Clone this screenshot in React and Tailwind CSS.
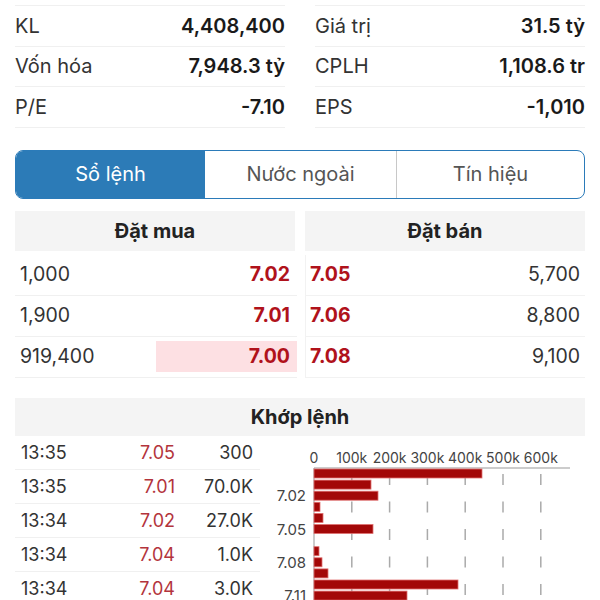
export default function App() {
  const stats = [
    [["KL", "4,408,400"], ["Giá trị", "31.5 tỷ"]],
    [["Vốn hóa", "7,948.3 tỷ"], ["CPLH", "1,108.6 tr"]],
    [["P/E", "-7.10"], ["EPS", "-1,010"]],
  ];

  const orders = [
    { buyQty: "1,000", buy: "7.02", sell: "7.05", sellQty: "5,700" },
    { buyQty: "1,900", buy: "7.01", sell: "7.06", sellQty: "8,800" },
    { buyQty: "919,400", buy: "7.00", sell: "7.08", sellQty: "9,100", hot: true },
  ];

  const trades = [
    ["13:35", "7.05", "300"],
    ["13:35", "7.01", "70.0K"],
    ["13:34", "7.02", "27.0K"],
    ["13:34", "7.04", "1.0K"],
    ["13:34", "7.04", "3.0K"],
  ];

  return (
    <div className="w-[600px] h-[600px] overflow-hidden bg-white text-[#333] font-['Inter','Liberation_Sans',sans-serif]">
      {/* STATS */}
      <div className="grid grid-cols-2 gap-x-[30px] px-[15px] pt-[5px]">
        {[0, 1].map((col) => (
          <div key={col} className="border-t border-[#f0f0f0]">
            {stats.map((row) => (
              <div
                key={row[col][0]}
                className="h-[40.5px] flex items-center justify-between border-b border-[#f0f0f0] text-[20px]"
              >
                <span className="text-[#333]">{row[col][0]}</span>
                <span className="font-semibold text-[#1a1a1a]">{row[col][1]}</span>
              </div>
            ))}
          </div>
        ))}
      </div>

      {/* TABS */}
      <div className="mx-[15px] mt-[22px] h-[49px] flex rounded-[8px] border-[1.5px] border-[#2b7bb9] overflow-hidden text-[20px]">
        <div className="w-[189px] flex items-center justify-center bg-[#2c7bb7] text-white">Sổ lệnh</div>
        <div className="w-[191px] flex items-center justify-center text-[#555]">Nước ngoài</div>
        <div className="flex-1 flex items-center justify-center border-l border-[#c8c8c8] text-[#555]">Tín hiệu</div>
      </div>

      {/* ORDER BOOK */}
      <div className="grid grid-cols-2 gap-x-[10px] px-[15px] mt-[12px]">
        <div className="h-[40px] flex items-center justify-center bg-[#f4f4f4] font-bold text-[20px] text-[#222]">Đặt mua</div>
        <div className="h-[40px] flex items-center justify-center bg-[#f4f4f4] font-bold text-[20px] text-[#222]">Đặt bán</div>
      </div>
      <div className="px-[15px] mt-[4px]">
        {orders.map((o) => (
          <div key={o.buy} className="flex h-[41px] text-[19.5px]">
            <div className="w-[282px] flex items-center justify-between border-b border-[#f0f0f0] pl-[5px]">
              <span>{o.buyQty}</span>
              <span
                className={
                  o.hot
                    ? "w-[141px] h-[31px] flex items-center justify-end pr-[7px] bg-[#fde0e3] font-bold text-[#b0121b]"
                    : "pr-[7px] font-bold text-[#b0121b]"
                }
              >
                {o.buy}
              </span>
            </div>
            <div className="w-[8px]" />
            <div className="flex-1 flex items-center justify-between border-b border-l border-[#f2f2f2] pl-[4px] pr-[5px]">
              <span className="font-bold text-[#b0121b]">{o.sell}</span>
              <span>{o.sellQty}</span>
            </div>
          </div>
        ))}
      </div>

      {/* MATCHED */}
      <div className="mx-[15px] mt-[20px] h-[38px] flex items-center justify-center bg-[#f4f4f4] font-bold text-[20px] text-[#222]">
        Khớp lệnh
      </div>
      <div className="flex pl-[15px]">
        <div className="w-[245px]">
          {trades.map((t, i) => (
            <div key={i} className="h-[34px] flex items-center border-b border-[#f0f0f0] text-[18px]">
              <span className="pl-[6px] w-[100px]">{t[0]}</span>
              <span className="w-[60px] text-right text-[#b3343c]">{t[1]}</span>
              <span className="w-[78px] text-right">{t[2]}</span>
            </div>
          ))}
        </div>
        <MatchChart />
      </div>
    </div>
  );
}

function MatchChart() {
  const ticks = ["0", "100k", "200k", "300k", "400k", "500k", "600k"];
  const bars = [168, 57, 64, 6, 9, 59, 0, 5, 8, 14, 144, 93];
  const labels = [
    ["7.02", 2],
    ["7.05", 5],
    ["7.08", 8],
    ["7.11", 11],
  ];
  const x0 = 49;
  const step = 37.8;

  return (
    <svg width="320" height="165" className="ml-[5px]">
      {ticks.map((t, i) => (
        <text
          key={t}
          x={x0 + i * step}
          y="27"
          textAnchor="middle"
          fontSize="14"
          fill="#444"
          fontFamily="Inter, 'Liberation Sans', sans-serif"
        >
          {t}
        </text>
      ))}
      <line x1={x0} y1="32" x2="305" y2="32" stroke="#bbb" strokeWidth="1.5" />
      {ticks.slice(1).map((t, i) => (
        <line
          key={t}
          x1={x0 + (i + 1) * step}
          y1="38"
          x2={x0 + (i + 1) * step}
          y2="165"
          stroke="#aaa"
          strokeWidth="1.5"
          strokeDasharray="11 16.5"
        />
      ))}
      <line x1={x0} y1="32" x2={x0} y2="165" stroke="#999" strokeWidth="1" />
      {bars.map((w, i) =>
        w > 0 ? (
          <rect
            key={i}
            x={x0}
            y={33 + i * 11.1}
            width={w}
            height="9"
            fill="#a30808"
            stroke="#e07070"
            strokeWidth="0.8"
          />
        ) : null
      )}
      {labels.map(([l, i]) => (
        <text
          key={l}
          x="41"
          y={33 + i * 11.1 + 10}
          textAnchor="end"
          fontSize="15"
          fill="#444"
          fontFamily="Inter, 'Liberation Sans', sans-serif"
        >
          {l}
        </text>
      ))}
    </svg>
  );
}
